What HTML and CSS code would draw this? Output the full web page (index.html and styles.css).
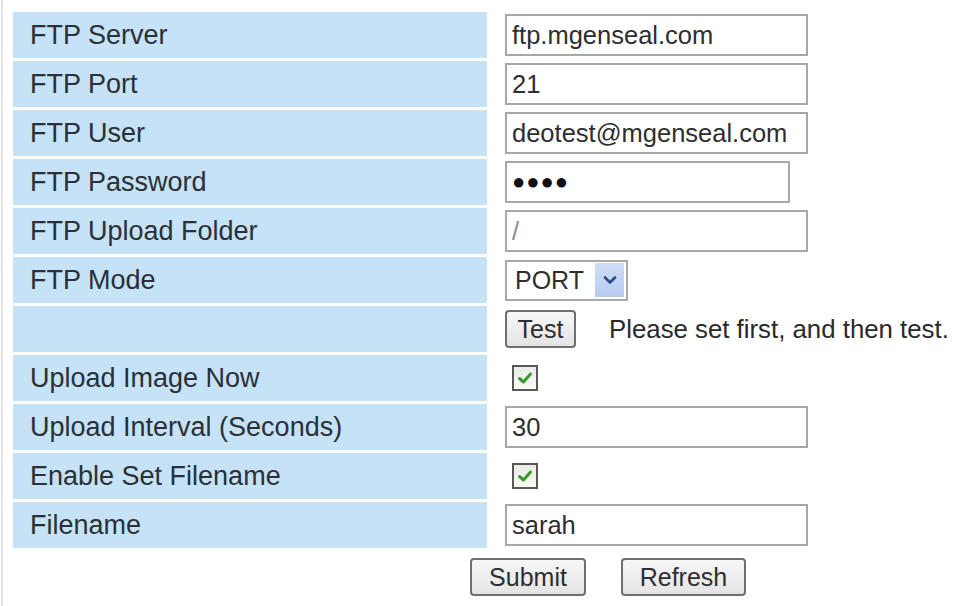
FILE: index.html
```html
<!DOCTYPE html>
<html>
<head>
<meta charset="utf-8">
<link rel="stylesheet" href="styles.css">
</head>
<body>
<div class="page">
  <div class="form">
    <div class="label">FTP Server</div>
    <div class="value"><input class="field" type="text" value="ftp.mgenseal.com"></div>

    <div class="label">FTP Port</div>
    <div class="value"><input class="field" type="text" value="21"></div>

    <div class="label">FTP User</div>
    <div class="value"><input class="field" type="text" value="deotest@mgenseal.com"></div>

    <div class="label">FTP Password</div>
    <div class="value"><div class="field field-pass"><span class="dots">●●●●</span></div></div>

    <div class="label">FTP Upload Folder</div>
    <div class="value"><input class="field field-dim" type="text" value="/"></div>

    <div class="label">FTP Mode</div>
    <div class="value">
      <div class="select">
        <span class="select-val">PORT</span>
        <span class="select-btn">
          <svg width="14" height="10" viewBox="0 0 14 10"><path d="M2 2.5 L7 7.5 L12 2.5" fill="none" stroke="#2b4c8c" stroke-width="2.6" stroke-linecap="round" stroke-linejoin="round"/></svg>
        </span>
      </div>
    </div>

    <div class="label"></div>
    <div class="value">
      <button class="btn btn-test">Test</button>
      <span class="msg">Please set first, and then test.</span>
    </div>

    <div class="label">Upload Image Now</div>
    <div class="value">
      <span class="check"><svg width="18" height="16" viewBox="0 0 18 16"><path d="M3.5 8.5 L7.5 12 L14.5 4" fill="none" stroke="#3c9a2c" stroke-width="3" stroke-linecap="round" stroke-linejoin="round"/></svg></span>
    </div>

    <div class="label">Upload Interval (Seconds)</div>
    <div class="value"><input class="field" type="text" value="30"></div>

    <div class="label">Enable Set Filename</div>
    <div class="value">
      <span class="check"><svg width="18" height="16" viewBox="0 0 18 16"><path d="M3.5 8.5 L7.5 12 L14.5 4" fill="none" stroke="#3c9a2c" stroke-width="3" stroke-linecap="round" stroke-linejoin="round"/></svg></span>
    </div>

    <div class="label">Filename</div>
    <div class="value"><input class="field" type="text" value="sarah"></div>
  </div>
  <div class="actions">
    <button class="btn btn-submit">Submit</button>
    <button class="btn btn-refresh">Refresh</button>
  </div>
</div>
</body>
</html>
```
FILE: styles.css
```css
html, body {
  margin: 0;
  padding: 0;
  background: #ffffff;
}

body {
  font-family: "Liberation Sans", Arial, sans-serif;
  color: #2a2f34;
  overflow: hidden;
}

.page {
  margin-left: 1px;
  border-left: 2px solid #e4e4e4;
  padding: 12px 0 0 10px;
  min-height: 594px;
}

.form {
  display: grid;
  grid-template-columns: 474px 1fr;
  column-gap: 3px;
  row-gap: 3px;
}

.label {
  height: 46px;
  background: #c5e2f6;
  display: flex;
  align-items: center;
  padding-left: 17px;
  font-size: 27px;
  color: #2a3036;
}

.value {
  height: 46px;
  display: flex;
  align-items: center;
  padding-left: 15px;
}

.field {
  box-sizing: border-box;
  width: 303px;
  height: 42px;
  margin: 0;
  border: 2px solid #a8a8a8;
  background: #ffffff;
  padding: 0 5px;
  font-family: "Liberation Sans", Arial, sans-serif;
  font-size: 25.5px;
  color: #2e2e30;
  outline: none;
}

.field-dim {
  color: #8a8a8a;
}

.field-pass {
  width: 285px;
  display: flex;
  align-items: center;
}

.dots {
  font-size: 22px;
  letter-spacing: 1px;
  color: #111;
}

.select {
  box-sizing: border-box;
  width: 123px;
  height: 41px;
  border: 2px solid #a8a8a8;
  display: flex;
  align-items: center;
  justify-content: space-between;
  padding: 0 2px 0 8px;
  background: #fff;
}

.select-val {
  font-size: 25px;
  color: #2e2e30;
}

.select-btn {
  width: 29px;
  height: 34px;
  background: linear-gradient(#cfdcf6, #b8cbef);
  display: flex;
  align-items: center;
  justify-content: center;
}

.btn {
  box-sizing: border-box;
  height: 38px;
  margin: 0;
  padding: 0;
  border: 2px solid #6f6f6f;
  border-radius: 4px;
  background: linear-gradient(#f7f7f7, #e4e4e4);
  font-family: "Liberation Sans", Arial, sans-serif;
  font-size: 25px;
  color: #2e2e30;
}

.btn-test {
  width: 71px;
}

.msg {
  margin-left: 33px;
  font-size: 25.8px;
  color: #2a2a2c;
  white-space: nowrap;
}

.check {
  box-sizing: border-box;
  width: 26px;
  height: 26px;
  margin-left: 7px;
  border: 2px solid #585858;
  background: linear-gradient(#e9ede6, #f7f9f5);
  display: flex;
  align-items: center;
  justify-content: center;
}

.actions {
  display: flex;
  gap: 35px;
  padding-left: 457px;
  margin-top: 10px;
}

.btn-submit {
  width: 116px;
}

.btn-refresh {
  width: 125px;
}
```
